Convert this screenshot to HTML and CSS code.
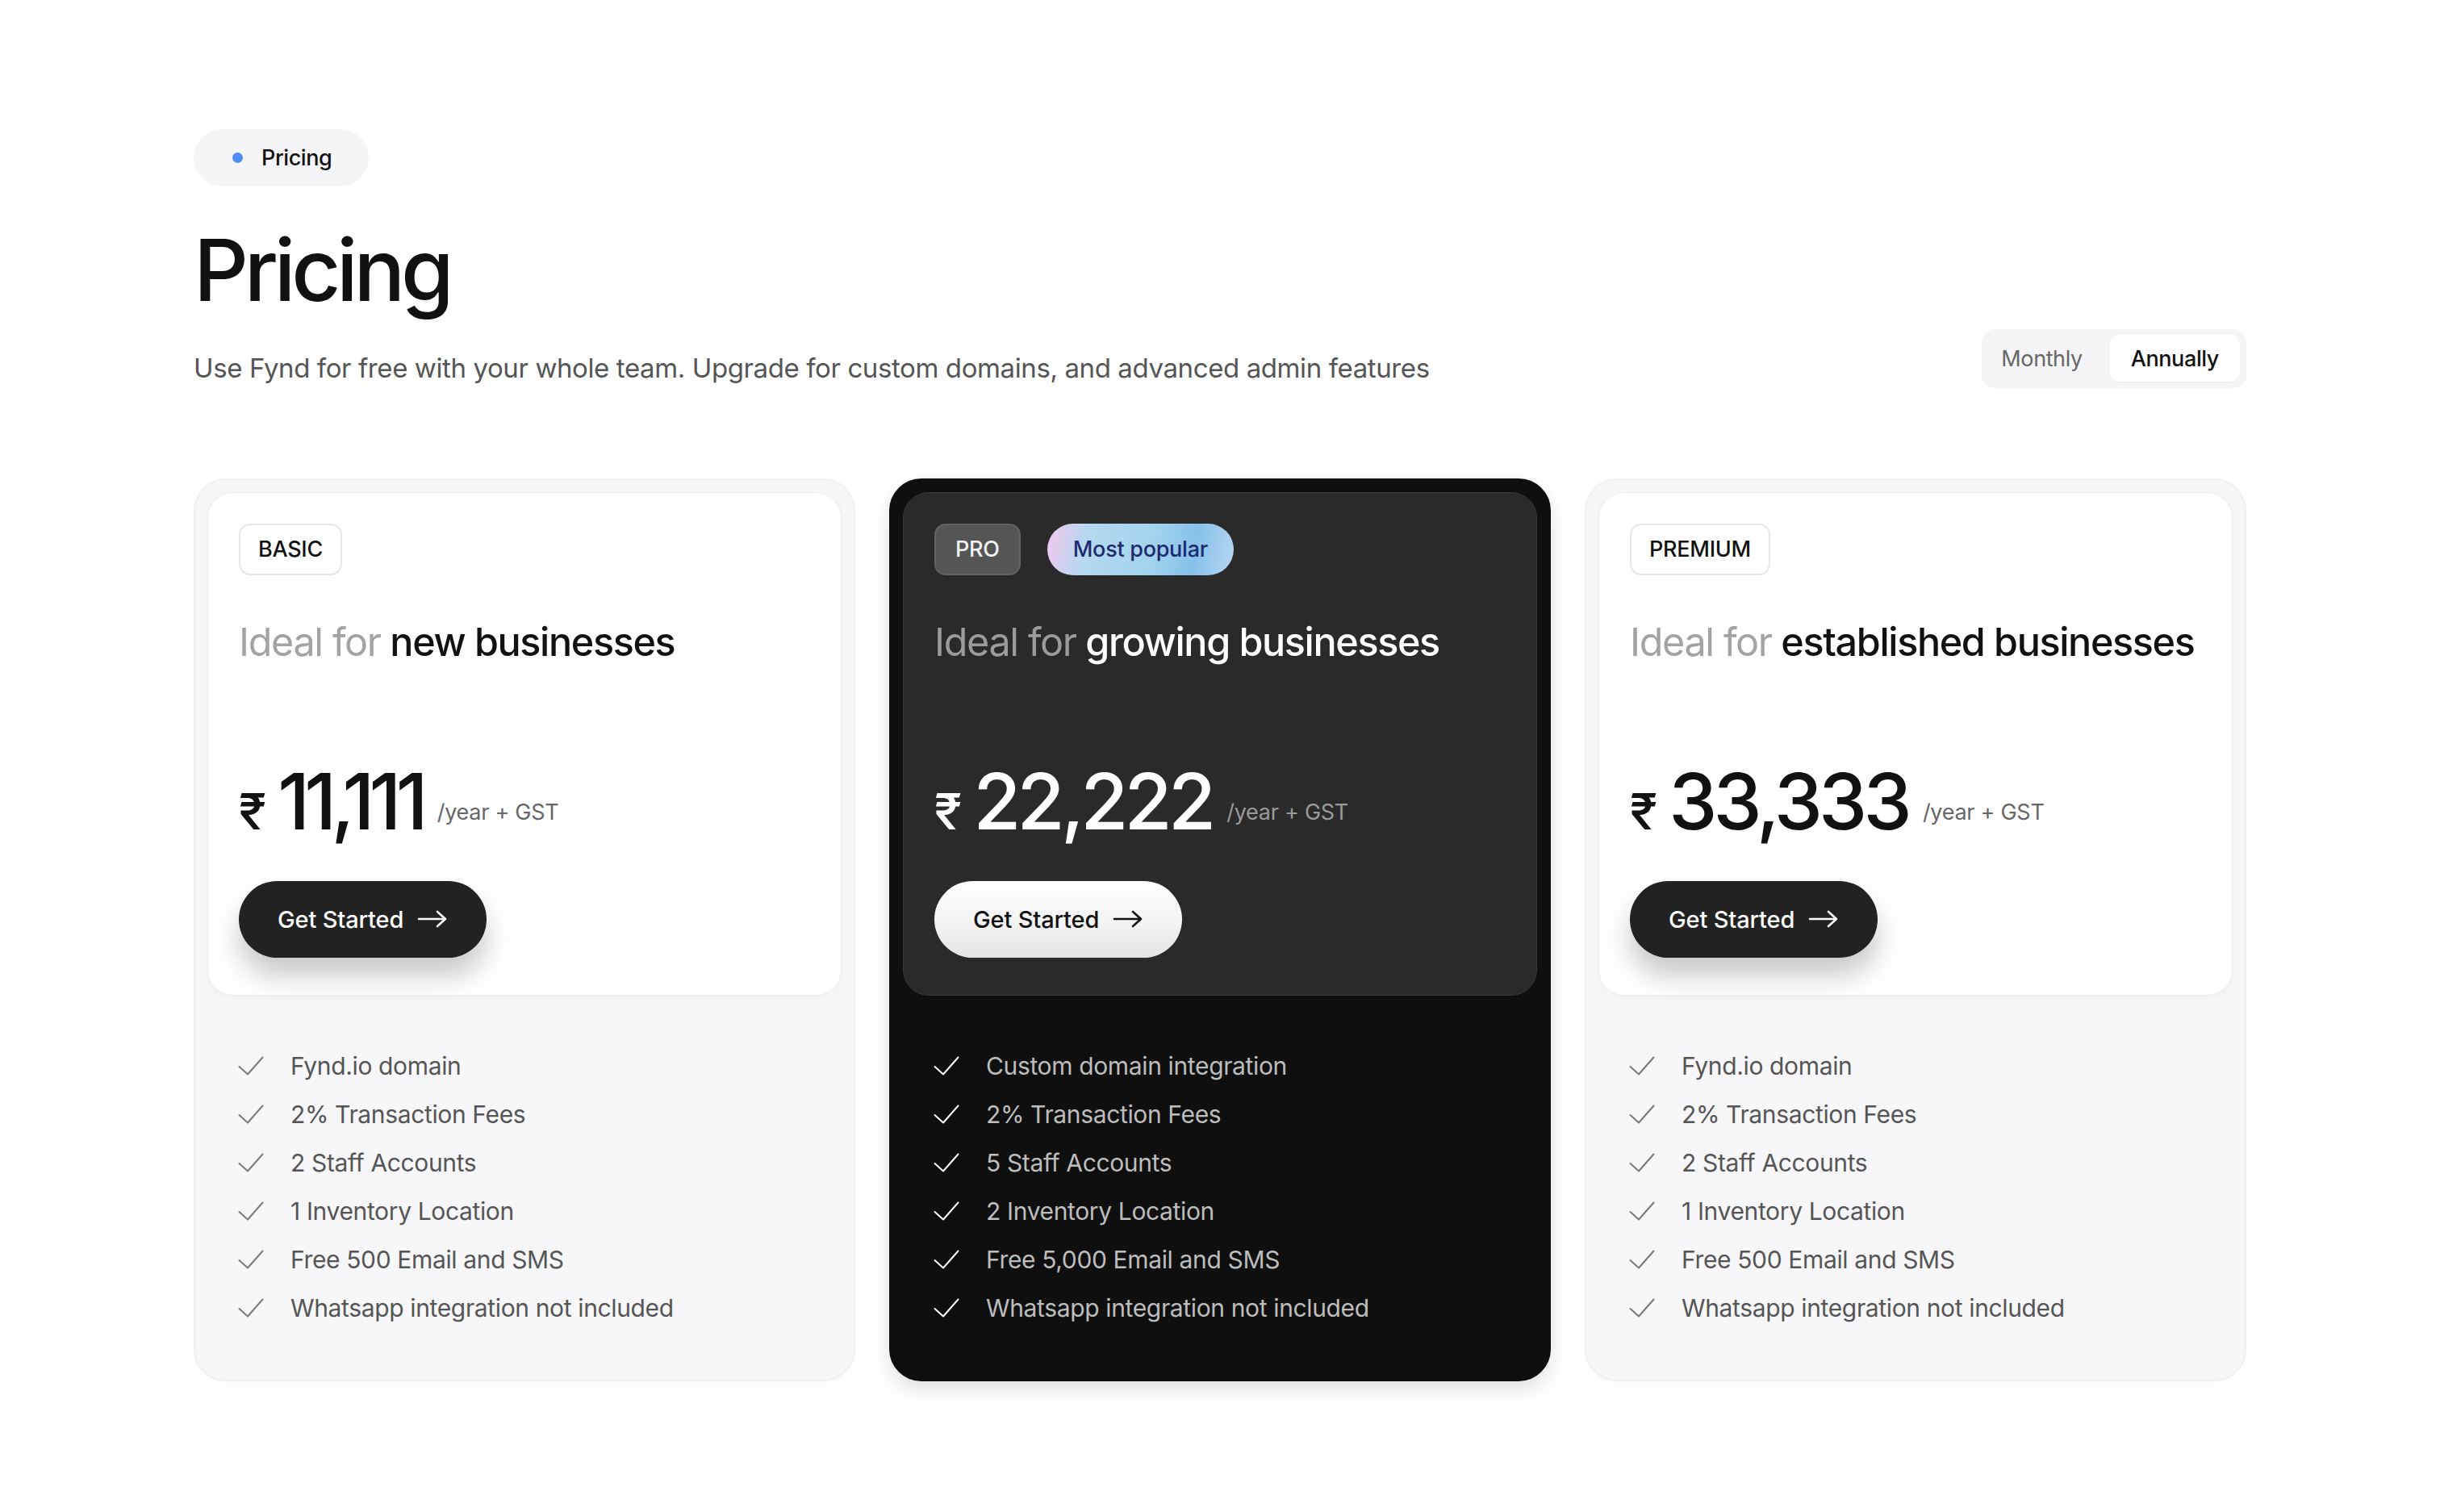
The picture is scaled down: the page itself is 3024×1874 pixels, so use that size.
FILE: index.html
```html
<!DOCTYPE html>
<html lang="en">
<head>
<meta charset="utf-8">
<title>Pricing</title>
<link rel="stylesheet" href="styles.css">
</head>
<body>
<main class="page">
  <div class="eyebrow"><span class="eyebrow-dot"></span>Pricing</div>
  <h1 class="heading">Pricing</h1>
  <div class="intro-row">
    <p class="subtitle">Use Fynd for free with your whole team. Upgrade for custom domains, and advanced admin features</p>
    <div class="toggle">
      <button class="toggle-btn">Monthly</button>
      <button class="toggle-btn toggle-btn--active">Annually</button>
    </div>
  </div>

  <section class="plans">
    <article class="plan">
      <div class="plan-top">
        <div class="tags"><span class="tag">BASIC</span></div>
        <h2 class="plan-title"><span class="muted">Ideal for</span> new businesses</h2>
        <div class="price"><span class="currency">₹</span><span class="amount amount--ones">11,111</span><span class="period">/year + GST</span></div>
        <button class="cta">Get Started
          <svg class="arrow" viewBox="0 0 38 24" width="38" height="24"><path d="M2 12H35M25 3L35 12L25 21" fill="none" stroke="currentColor" stroke-width="2.6" stroke-linecap="round" stroke-linejoin="round"/></svg>
        </button>
      </div>
      <ul class="features">
        <li><svg class="check" viewBox="0 0 32 24" width="32" height="24"><path d="M1.5 13L12 22.5L30.5 1.5" fill="none" stroke="currentColor" stroke-width="2" stroke-linecap="round" stroke-linejoin="round"/></svg>Fynd.io domain</li>
        <li><svg class="check" viewBox="0 0 32 24" width="32" height="24"><path d="M1.5 13L12 22.5L30.5 1.5" fill="none" stroke="currentColor" stroke-width="2" stroke-linecap="round" stroke-linejoin="round"/></svg>2% Transaction Fees</li>
        <li><svg class="check" viewBox="0 0 32 24" width="32" height="24"><path d="M1.5 13L12 22.5L30.5 1.5" fill="none" stroke="currentColor" stroke-width="2" stroke-linecap="round" stroke-linejoin="round"/></svg>2 Staff Accounts</li>
        <li><svg class="check" viewBox="0 0 32 24" width="32" height="24"><path d="M1.5 13L12 22.5L30.5 1.5" fill="none" stroke="currentColor" stroke-width="2" stroke-linecap="round" stroke-linejoin="round"/></svg>1 Inventory Location</li>
        <li><svg class="check" viewBox="0 0 32 24" width="32" height="24"><path d="M1.5 13L12 22.5L30.5 1.5" fill="none" stroke="currentColor" stroke-width="2" stroke-linecap="round" stroke-linejoin="round"/></svg>Free 500 Email and SMS</li>
        <li><svg class="check" viewBox="0 0 32 24" width="32" height="24"><path d="M1.5 13L12 22.5L30.5 1.5" fill="none" stroke="currentColor" stroke-width="2" stroke-linecap="round" stroke-linejoin="round"/></svg>Whatsapp integration not included</li>
      </ul>
    </article>

    <article class="plan plan--dark">
      <div class="plan-top">
        <div class="tags"><span class="tag">PRO</span><span class="popular">Most popular</span></div>
        <h2 class="plan-title"><span class="muted">Ideal for</span> growing businesses</h2>
        <div class="price"><span class="currency">₹</span><span class="amount">22,222</span><span class="period">/year + GST</span></div>
        <button class="cta">Get Started
          <svg class="arrow" viewBox="0 0 38 24" width="38" height="24"><path d="M2 12H35M25 3L35 12L25 21" fill="none" stroke="currentColor" stroke-width="2.6" stroke-linecap="round" stroke-linejoin="round"/></svg>
        </button>
      </div>
      <ul class="features">
        <li><svg class="check" viewBox="0 0 32 24" width="32" height="24"><path d="M1.5 13L12 22.5L30.5 1.5" fill="none" stroke="currentColor" stroke-width="2" stroke-linecap="round" stroke-linejoin="round"/></svg>Custom domain integration</li>
        <li><svg class="check" viewBox="0 0 32 24" width="32" height="24"><path d="M1.5 13L12 22.5L30.5 1.5" fill="none" stroke="currentColor" stroke-width="2" stroke-linecap="round" stroke-linejoin="round"/></svg>2% Transaction Fees</li>
        <li><svg class="check" viewBox="0 0 32 24" width="32" height="24"><path d="M1.5 13L12 22.5L30.5 1.5" fill="none" stroke="currentColor" stroke-width="2" stroke-linecap="round" stroke-linejoin="round"/></svg>5 Staff Accounts</li>
        <li><svg class="check" viewBox="0 0 32 24" width="32" height="24"><path d="M1.5 13L12 22.5L30.5 1.5" fill="none" stroke="currentColor" stroke-width="2" stroke-linecap="round" stroke-linejoin="round"/></svg>2 Inventory Location</li>
        <li><svg class="check" viewBox="0 0 32 24" width="32" height="24"><path d="M1.5 13L12 22.5L30.5 1.5" fill="none" stroke="currentColor" stroke-width="2" stroke-linecap="round" stroke-linejoin="round"/></svg>Free 5,000 Email and SMS</li>
        <li><svg class="check" viewBox="0 0 32 24" width="32" height="24"><path d="M1.5 13L12 22.5L30.5 1.5" fill="none" stroke="currentColor" stroke-width="2" stroke-linecap="round" stroke-linejoin="round"/></svg>Whatsapp integration not included</li>
      </ul>
    </article>

    <article class="plan">
      <div class="plan-top">
        <div class="tags"><span class="tag">PREMIUM</span></div>
        <h2 class="plan-title"><span class="muted">Ideal for</span> established businesses</h2>
        <div class="price"><span class="currency">₹</span><span class="amount">33,333</span><span class="period">/year + GST</span></div>
        <button class="cta">Get Started
          <svg class="arrow" viewBox="0 0 38 24" width="38" height="24"><path d="M2 12H35M25 3L35 12L25 21" fill="none" stroke="currentColor" stroke-width="2.6" stroke-linecap="round" stroke-linejoin="round"/></svg>
        </button>
      </div>
      <ul class="features">
        <li><svg class="check" viewBox="0 0 32 24" width="32" height="24"><path d="M1.5 13L12 22.5L30.5 1.5" fill="none" stroke="currentColor" stroke-width="2" stroke-linecap="round" stroke-linejoin="round"/></svg>Fynd.io domain</li>
        <li><svg class="check" viewBox="0 0 32 24" width="32" height="24"><path d="M1.5 13L12 22.5L30.5 1.5" fill="none" stroke="currentColor" stroke-width="2" stroke-linecap="round" stroke-linejoin="round"/></svg>2% Transaction Fees</li>
        <li><svg class="check" viewBox="0 0 32 24" width="32" height="24"><path d="M1.5 13L12 22.5L30.5 1.5" fill="none" stroke="currentColor" stroke-width="2" stroke-linecap="round" stroke-linejoin="round"/></svg>2 Staff Accounts</li>
        <li><svg class="check" viewBox="0 0 32 24" width="32" height="24"><path d="M1.5 13L12 22.5L30.5 1.5" fill="none" stroke="currentColor" stroke-width="2" stroke-linecap="round" stroke-linejoin="round"/></svg>1 Inventory Location</li>
        <li><svg class="check" viewBox="0 0 32 24" width="32" height="24"><path d="M1.5 13L12 22.5L30.5 1.5" fill="none" stroke="currentColor" stroke-width="2" stroke-linecap="round" stroke-linejoin="round"/></svg>Free 500 Email and SMS</li>
        <li><svg class="check" viewBox="0 0 32 24" width="32" height="24"><path d="M1.5 13L12 22.5L30.5 1.5" fill="none" stroke="currentColor" stroke-width="2" stroke-linecap="round" stroke-linejoin="round"/></svg>Whatsapp integration not included</li>
      </ul>
    </article>
  </section>
</main>
</body>
</html>
```

FILE: styles.css
```css
* { box-sizing: border-box; }

html, body {
  margin: 0;
  padding: 0;
  background: #ffffff;
}

body {
  font-family: Inter, "Noto Sans", "Liberation Sans", sans-serif;
  color: #111111;
}

.page {
  width: 2544px;
  margin: 0 auto;
  padding: 160px 0 160px;
}

/* eyebrow pill */
.eyebrow {
  display: inline-flex;
  align-items: center;
  gap: 23px;
  height: 71px;
  padding: 0 46px 0 48px;
  border-radius: 36px;
  background: #f5f5f7;
  font-size: 27px;
  font-weight: 500;
  letter-spacing: -0.015em;
  color: #111;
}

.eyebrow-dot {
  width: 13px;
  height: 13px;
  border-radius: 50%;
  background: #4f8ef7;
}

.heading {
  margin: 46px 0 0;
  font-size: 106px;
  line-height: 1.1;
  font-weight: 500;
  letter-spacing: -0.05em;
  color: #111;
}

.intro-row {
  display: flex;
  justify-content: space-between;
  align-items: flex-end;
  margin-top: 14px;
}

.subtitle {
  margin: 0 0 3px;
  font-size: 33px;
  line-height: 44px;
  letter-spacing: -0.012em;
  color: #555;
}

.toggle {
  display: flex;
  align-items: center;
  height: 73px;
  padding: 8px;
  border-radius: 16px;
  background: #f5f5f7;
}

.toggle-btn {
  height: 58px;
  padding: 0 16px;
  border: 0;
  border-radius: 12px;
  background: transparent;
  font-family: inherit;
  font-size: 27px;
  letter-spacing: -0.015em;
  color: #666;
}

.toggle-btn--active {
  padding: 0 26px;
  margin-left: 18px;
  background: #fff;
  color: #111;
  font-weight: 500;
  box-shadow: 0 1px 2px rgba(0, 0, 0, 0.04);
}

/* plans */
.plans {
  display: grid;
  grid-template-columns: repeat(3, 1fr);
  gap: 42px;
  margin-top: 112px;
}

.plan {
  display: flex;
  flex-direction: column;
  padding: 15px;
  border: 2px solid #f0f0f2;
  border-radius: 40px;
  background: #f7f7f9;
  box-shadow: 0 4px 14px rgba(0, 0, 0, 0.025);
}

.plan-top {
  padding: 38px 38px 46px;
  border: 1px solid #efeff1;
  border-radius: 32px;
  background: #ffffff;
  box-shadow: 0 2px 8px rgba(0, 0, 0, 0.03);
}

.tags {
  display: flex;
  gap: 33px;
  height: 64px;
}

.tag {
  display: inline-flex;
  align-items: center;
  height: 64px;
  padding: 0 22px;
  border: 2px solid #e6e6e8;
  border-radius: 14px;
  font-size: 27px;
  font-weight: 500;
  letter-spacing: -0.01em;
  color: #111;
}

.popular {
  display: inline-flex;
  align-items: center;
  height: 64px;
  padding: 0 32px;
  border-radius: 32px;
  background: linear-gradient(100deg, #f4c8ef 0%, #b4d8f0 22%, #a3d4ee 55%, #86c1ea 78%, #b8d6f4 100%);
  font-size: 27px;
  font-weight: 500;
  letter-spacing: -0.01em;
  color: #1d2a6c;
}

.plan-title {
  margin: 53px 0 0;
  font-size: 48.5px;
  line-height: 60px;
  font-weight: 500;
  letter-spacing: -0.028em;
  color: #111;
  white-space: nowrap;
}

.muted {
  color: #a3a3a3;
  font-weight: 400;
}

.price {
  margin-top: 119px;
  height: 96px;
  line-height: 96px;
  white-space: nowrap;
}

.currency {
  font-size: 62px;
  font-weight: 500;
  margin-right: 14px;
  color: #111;
}

.amount {
  font-size: 96px;
  font-weight: 500;
  letter-spacing: -0.05em;
  color: #111;
}

.amount--ones {
  letter-spacing: -0.07em;
}

.period {
  margin-left: 18px;
  vertical-align: 12px;
  font-size: 27px;
  letter-spacing: -0.01em;
  color: #666;
}

.cta {
  display: inline-flex;
  align-items: center;
  gap: 17px;
  height: 95px;
  margin-top: 51px;
  padding: 0 48px;
  border: 0;
  border-radius: 48px;
  background: #222222;
  color: #ffffff;
  font-family: inherit;
  font-size: 29px;
  font-weight: 500;
  letter-spacing: -0.005em;
  box-shadow: 0 22px 34px rgba(0, 0, 0, 0.22);
}

.arrow { display: block; }

.features {
  list-style: none;
  margin: 57px 0 0;
  padding: 0 38px 44px;
}

.features li {
  display: flex;
  align-items: center;
  gap: 33px;
  height: 60px;
  font-size: 30px;
  letter-spacing: -0.012em;
  color: #555;
}

.check {
  flex: none;
  color: #7a7a7a;
}

/* dark plan */
.plan--dark {
  background: #0f0f0f;
  border-color: #0f0f0f;
  box-shadow: 0 10px 24px rgba(0, 0, 0, 0.12);
}

.plan--dark .plan-top {
  background: #2a2a2a;
  border-color: #383838;
  box-shadow: none;
}

.plan--dark .tag {
  padding: 0 24px;
  background: #555555;
  border-color: #626262;
  color: #f2f2f2;
}

.plan--dark .plan-title { color: #ffffff; }
.plan--dark .muted { color: #9b9b9b; }
.plan--dark .currency,
.plan--dark .amount { color: #ffffff; }
.plan--dark .period { color: #9a9a9a; }

.plan--dark .cta {
  background: linear-gradient(180deg, #ffffff 0%, #f3f3f3 55%, #e4e4e4 100%);
  color: #111111;
  box-shadow: none;
}

.plan--dark .features li { color: #bdbdbd; }
.plan--dark .check { color: #ffffff; }
```
